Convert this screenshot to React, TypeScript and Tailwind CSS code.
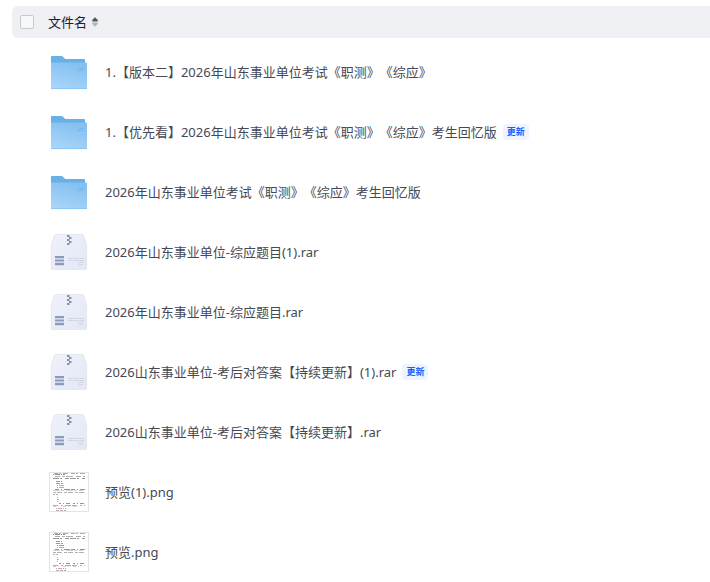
import React from 'react';

type FileKind = 'folder' | 'archive' | 'image';

interface FileItem {
    id: number;
    name: string;
    kind: FileKind;
    updated?: boolean;
    marks?: number;
}

const files: FileItem[] = [
    { id: 1, name: '1.【版本二】2026年山东事业单位考试《职测》《综应》', kind: 'folder' },
    { id: 2, name: '1.【优先看】2026年山东事业单位考试《职测》《综应》考生回忆版', kind: 'folder', updated: true },
    { id: 3, name: '2026年山东事业单位考试《职测》《综应》考生回忆版', kind: 'folder' },
    { id: 4, name: '2026年山东事业单位-综应题目(1).rar', kind: 'archive' },
    { id: 5, name: '2026年山东事业单位-综应题目.rar', kind: 'archive' },
    { id: 6, name: '2026山东事业单位-考后对答案【持续更新】(1).rar', kind: 'archive', updated: true },
    { id: 7, name: '2026山东事业单位-考后对答案【持续更新】.rar', kind: 'archive' },
    { id: 8, name: '预览(1).png', kind: 'image', marks: 2 },
    { id: 9, name: '预览.png', kind: 'image', marks: 1 },
];

const FolderIcon = () => (
    <svg viewBox="0 0 40 40" className="w-10 h-10" aria-hidden="true">
        <defs>
            <linearGradient id="folder-front" x1="0.2" y1="1" x2="0.6" y2="0">
                <stop offset="0" stopColor="#a9d5fa" />
                <stop offset="1" stopColor="#84c0f0" />
            </linearGradient>
        </defs>
        <path d="M2 4.6Q2 4 2.6 4H12.4Q13.2 4 13.8 4.6L16.2 7H35Q36 7 36 8V16H2Z" fill="#68b0e6" />
        <path d="M2 10.6H37.2Q38 10.6 38 11.4V36.2Q38 37 37.2 37H2.8Q2 37 2 36.2Z" fill="url(#folder-front)" />
        <path d="M30 16.5H35M28 18.5H34" stroke="#6fb0e4" strokeWidth="0.7" />
        <path d="M2 36.6H38" stroke="#84c0ef" strokeWidth="0.8" />
    </svg>
);

const ArchiveIcon = () => (
    <svg viewBox="0 0 40 40" className="w-10 h-10" aria-hidden="true">
        <defs>
            <linearGradient id="archive-body" x1="0" y1="0" x2="1" y2="1">
                <stop offset="0" stopColor="#eff2fb" />
                <stop offset="1" stopColor="#e3e7f5" />
            </linearGradient>
        </defs>
        <path
            d="M7 2.4H33Q34.2 2.4 34.6 3.6L37.6 13V36.4Q37.6 37.6 36.4 37.6H3.6Q2.4 37.6 2.4 36.4V13L5.4 3.6Q5.8 2.4 7 2.4Z"
            fill="url(#archive-body)"
            stroke="#e0e2ea"
            strokeWidth="0.8"
        />
        <path d="M18 3h2.5v2H18zM20 5h2.5v2H20zM18 7h2.5v2H18zM20 9h2.5v2H20zM18 11h2.5v2H18z" fill="#8890a6" />
        <path d="M6 24h9v2.2H6zM6 27.4h9v2.2H6zM6 30.8h9v2.4H6z" fill="#8c9abb" />
        <path d="M19 26.5H35M19 28.5H35M29 30.5H35M30 32.5H34" stroke="#d0d5e5" strokeWidth="1" strokeDasharray="5 0.6" />
    </svg>
);

const ImageThumb = ({ marks = 1 }: { marks?: number }) => (
    <svg viewBox="0 0 40 40" className="w-10 h-10" aria-hidden="true">
        <rect x="0.5" y="0.5" width="39" height="39" fill="#fff" stroke="#e4e4e4" />
        <g fill="none" stroke="#9a9a9a" strokeWidth="0.8">
            <path d="M5 1.5H36" strokeDasharray="4 1 2 2 5 3" />
            <path d="M4 2.5H16" stroke="#6f6f6f" strokeDasharray="1 1 5 1" />
            <path d="M6 4.5H36" strokeDasharray="5 2 3 1 7 3" />
            <path d="M4 6.5H36" stroke="#7c7c7c" strokeDasharray="6 1 2 3 4 1" />
            <path d="M7 9.5H13M7 11.5H14" strokeDasharray="4 1" stroke="#7c7c7c" />
            <path d="M6 17.5H36" strokeDasharray="4 2 1 2 6 1" stroke="#7c7c7c" />
            <path d="M4 18.5H34" strokeDasharray="7 1 3 2" stroke="#c4c4c4" />
            <path d="M4 20.5H36" strokeDasharray="3 1 5 2" />
            <path d="M4 22.5H9M8 25.5H9M8 27.5H10M8 29.5H9" strokeDasharray="2 1" />
            <path d="M10 31.5H35" strokeDasharray="2 2 1 2 4 3" stroke="#7c7c7c" />
            <path d="M4 33.5H36" strokeDasharray="5 3 2 2 6 1" />
            <path d="M4 34.5H34" strokeDasharray="3 2 1 4" stroke="#c4c4c4" />
            <path d="M7 38.5H17" strokeDasharray="3 1" />
        </g>
        <g fill="none" stroke="#d98f98" strokeWidth="0.9">
            {marks > 1 && <path d="M8 13.5H15" strokeDasharray="1 1 5 1" />}
            {marks === 1 && <path d="M8 13.5H15" stroke="#8c8c8c" strokeDasharray="1 1 5 1" />}
            <path d="M8 15.5H15" strokeDasharray="1 1 5 1" />
            <path d="M7 36.5H17" strokeDasharray="1 1 4 1" />
        </g>
    </svg>
);

const FileIcon = ({ file }: { file: FileItem }) => {
    if (file.kind === 'folder') return <FolderIcon />;
    if (file.kind === 'archive') return <ArchiveIcon />;
    return <ImageThumb marks={file.marks} />;
};

const FileRow = ({ file }: { file: FileItem }) => (
    <li className="flex items-center h-15 pl-[37px]">
        <span className="shrink-0">
            <FileIcon file={file} />
        </span>
        <span className="ml-4 whitespace-nowrap">{file.name}</span>
        {file.updated && (
            <span className="ml-1.5 px-1 h-4 rounded-sm bg-[#edf4ff] text-[9px] leading-4 font-bold text-[#1463ff] whitespace-nowrap">
                更新
            </span>
        )}
    </li>
);

export default function App() {
    return (
        <main className="pl-3 pt-1.5 bg-white overflow-hidden font-['Noto_Sans','Noto_Sans_CJK_SC',sans-serif] text-[13px] leading-5 text-[#464955] [text-spacing-trim:space-all]">
            <header className="flex items-center h-8 pl-2 rounded-l-md bg-[#eff0f3]">
                <input
                    type="checkbox"
                    aria-label="全选"
                    className="appearance-none w-3.5 h-3.5 rounded-xs border border-[#c8cad0] bg-[#f7f8fa] checked:bg-[#1463ff]"
                />
                <button type="button" className="ml-3.5 flex items-center gap-1 text-[#1d2030]">
                    <span>文件名</span>
                    <svg viewBox="0 0 8 10" className="w-2 h-2.5" aria-hidden="true">
                        <path d="M4 0.3L7 3.3Q7 4.4 6.2 4.4H1.8Q1 4.4 1 3.3Z" fill="#55575e" />
                        <path d="M4 9.7L7 6.7Q7 5.6 6.2 5.6H1.8Q1 5.6 1 6.7Z" fill="#b4b6bc" />
                    </svg>
                </button>
            </header>
            <ul className="mt-1">
                {files.map(file => (
                    <FileRow key={file.id} file={file} />
                ))}
            </ul>
        </main>
    );
}
